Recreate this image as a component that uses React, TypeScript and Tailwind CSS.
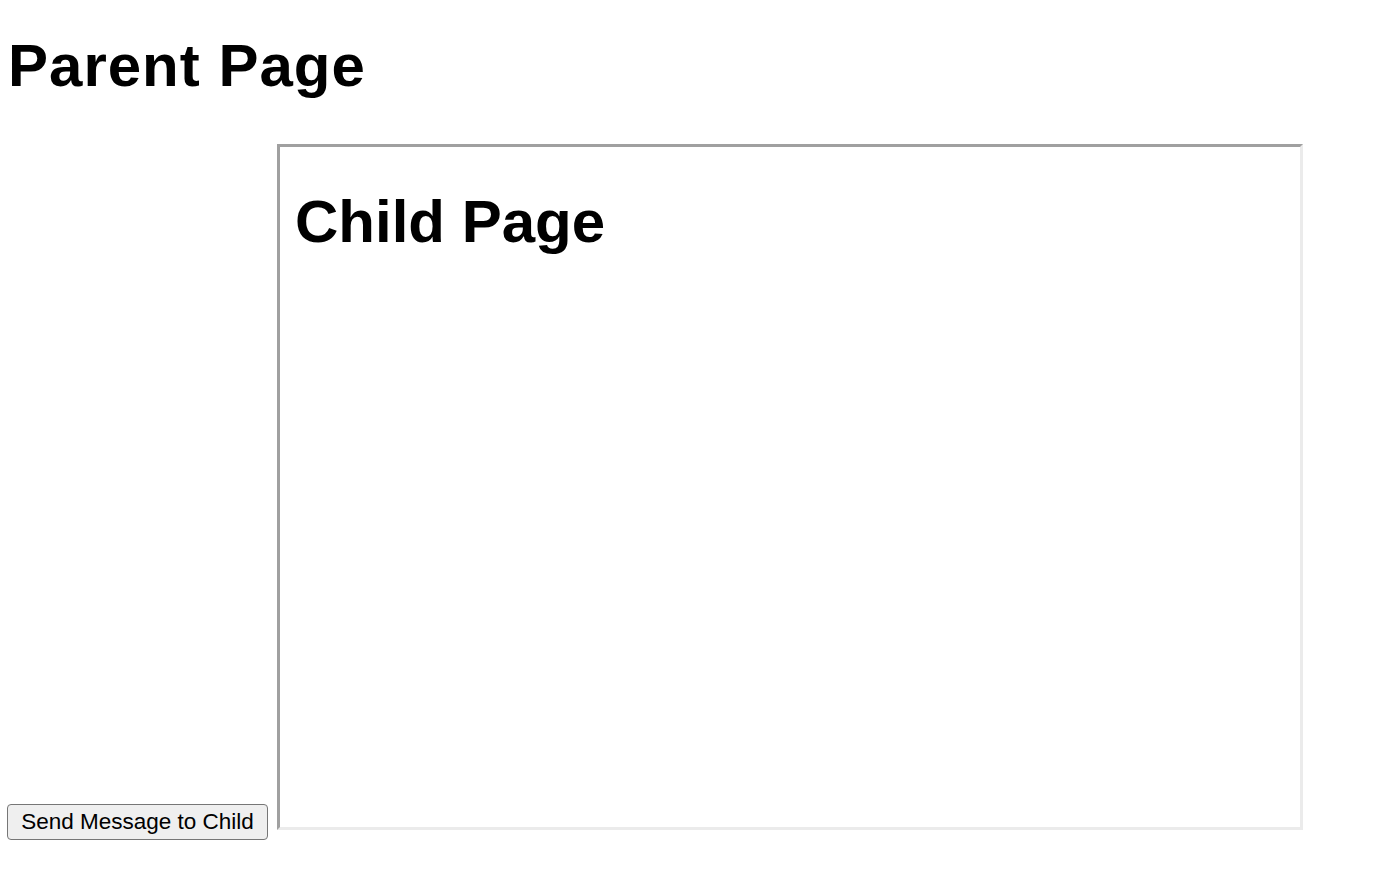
import React from "react";

export default function App() {
  return (
    <div className="min-h-[891px] bg-white pl-[8px] text-black" style={{ fontFamily: '"Liberation Sans", Arial, sans-serif' }}>
      <h1 className="pt-[31px] text-[60px] font-bold leading-[69px] tracking-[1px] m-0">Parent Page</h1>
      <div className="mt-[44px] flex items-end">
        <button className="mb-[-10px] ml-[-1px] h-[36px] w-[261px] rounded-[4px] border border-[#767676] bg-[#efefef] text-[22.5px] leading-none text-black">
          Send Message to Child
        </button>
        <div className="ml-[9px] h-[686px] w-[1026px] border-[3px] border-t-[#a0a0a0] border-l-[#a0a0a0] border-r-[#ebebeb] border-b-[#ebebeb] bg-white">
          <h1 className="pl-[15px] pt-[40px] text-[60px] font-bold leading-[69px]">Child Page</h1>
        </div>
      </div>
    </div>
  );
}
